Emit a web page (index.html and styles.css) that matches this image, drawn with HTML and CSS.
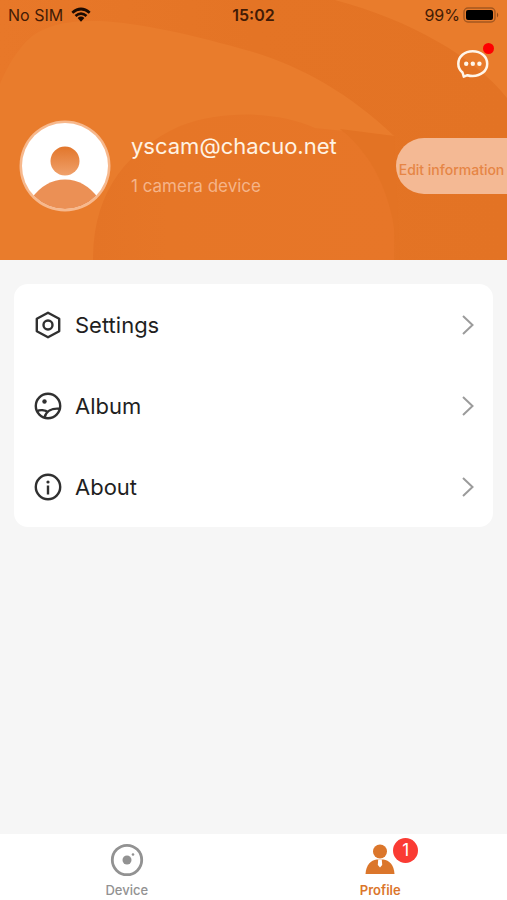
FILE: index.html
```
<!DOCTYPE html>
<html lang="en">
<head>
<meta charset="utf-8">
<meta name="viewport" content="width=device-width, initial-scale=1">
<title>Profile</title>
<link rel="stylesheet" href="styles.css">
</head>
<body>
<header class="hero">
  <svg class="hero-art" viewBox="0 0 507 260" preserveAspectRatio="none" aria-hidden="true">
    <defs>
      <linearGradient id="disc" x1="0" y1="0" x2="1" y2="0">
        <stop offset="0" stop-color="#e47426"/><stop offset="0.25" stop-color="#e67627"/><stop offset="1" stop-color="#e77628"/>
      </linearGradient>
      <linearGradient id="corner" x1="0" y1="0" x2="1" y2="0">
        <stop offset="0" stop-color="#e87829"/><stop offset="0.5" stop-color="#e47425"/><stop offset="1" stop-color="#e37324"/>
      </linearGradient>
    </defs>
    <rect width="507" height="260" fill="#e97c2c"/>
    <path d="M0 0H335C410 20 475 57 507 98V260H390L394 136C350 94 302 67 253 52C190 34 140 23 100 21C60 20 38 28 24 44C12 58 6 70 0 84Z" fill="url(#corner)"/>
    <path d="M93 260C93 190 128 150 180 126C225 109 280 112 315 128L394 136V260Z" fill="url(#disc)"/>
    <path d="M340 129L394 136L400 260H397C396 210 380 160 340 129Z" fill="#e37324"/>
  </svg>
  <div class="status">
    <div class="carrier"><span>No SIM</span>
      <svg width="20" height="16" viewBox="0 0 20 16" aria-hidden="true">
        <g fill="none" stroke="#1c0b02" stroke-width="2.7"><path d="M1.3 5.7Q10-1.7 18.7 5.7"/><path d="M4.500 9Q10 4.300 15.500 9"/></g>
        <path d="M6.600 11Q10 8.200 13.400 11L10 14.800Z" fill="#1c0b02"/>
      </svg>
    </div>
    <strong class="clock">15:02</strong>
    <div class="battery"><span>99%</span>
      <svg width="36" height="16" viewBox="0 0 36 16" aria-hidden="true">
        <rect x="1" y="1" width="31" height="14" rx="4" fill="none" stroke="#a4571f" stroke-width="1.4"/>
        <rect x="3" y="3" width="27" height="10" rx="2" fill="#000"/>
        <path d="M34 5.500Q36.500 8 34 10.500Z" fill="#914917"/>
      </svg>
    </div>
  </div>
  <div class="actions">
    <button class="messages" type="button" aria-label="Messages">
      <svg width="34" height="32" viewBox="0 0 34 32" aria-hidden="true">
        <path d="M6.500 23.500C3.800 21.200 2.300 18.200 2.300 14.700C2.300 7.400 8.600 2.200 16.700 2.200S31.200 7.400 31.200 14.700S24.800 27 16.700 27C14.800 27 13 26.700 11.500 26.200L7.800 27.700Z" fill="none" stroke="#fff6ea" stroke-width="2.500" stroke-linejoin="round"/>
        <g fill="#fff6ea"><circle cx="10.200" cy="14.800" r="2.200"/><circle cx="16.800" cy="14.800" r="2.200"/><circle cx="23.400" cy="14.800" r="2.200"/></g>
      </svg>
      <span class="dot"></span>
    </button>
  </div>
  <div class="profile">
    <svg class="avatar" width="92" height="92" viewBox="0 0 92 92" role="img" aria-label="Avatar">
      <defs>
        <linearGradient id="head" x1="0" y1="0" x2="0" y2="1"><stop offset="0" stop-color="#e2762b"/><stop offset="1" stop-color="#f0a16b"/></linearGradient>
        <clipPath id="round"><circle cx="46" cy="46" r="43"/></clipPath>
      </defs>
      <circle cx="46" cy="46" r="45.500" fill="#f7b88c"/>
      <circle cx="46" cy="46" r="43" fill="#fff"/>
      <circle cx="46" cy="41" r="14.500" fill="url(#head)"/>
      <path d="M12 79Q26 59.500 46 59.500T80 79V92H12Z" fill="#eb9055" clip-path="url(#round)"/>
    </svg>
    <div class="identity">
      <h1>yscam@chacuo.net</h1>
      <p>1 camera device</p>
    </div>
    <button class="edit" type="button">Edit information</button>
  </div>
</header>
<main>
  <nav class="menu" aria-label="Account">
    <a href="#settings">
      <svg class="icon" viewBox="0 0 28 28" aria-hidden="true"><path d="M14 1.800L25.200 7.800V20.200L14 26.200L2.800 20.200V7.800Z" stroke-linejoin="round"/><circle cx="14" cy="14" r="4.500"/></svg>
      <span>Settings</span>
      <svg class="chevron" viewBox="0 0 12 20" aria-hidden="true"><path d="M1 1L10.500 10L1 19"/></svg>
    </a>
    <a href="#album">
      <svg class="icon" viewBox="0 0 28 28" aria-hidden="true"><circle cx="14" cy="14" r="12.200"/><path d="M2.500 19.500C6 17.500 11 17.700 14.500 20.500M10.500 25.500C12 19.500 17.500 16 25.500 16.800"/><circle cx="10.500" cy="9.500" r="2.200" fill="#303030" stroke="none"/></svg>
      <span>Album</span>
      <svg class="chevron" viewBox="0 0 12 20" aria-hidden="true"><path d="M1 1L10.500 10L1 19"/></svg>
    </a>
    <a href="#about">
      <svg class="icon" viewBox="0 0 28 28" aria-hidden="true"><circle cx="14" cy="14" r="12.200"/><path d="M14 12.500V21.500"/><circle cx="14" cy="9" r="1.600" fill="#303030" stroke="none"/></svg>
      <span>About</span>
      <svg class="chevron" viewBox="0 0 12 20" aria-hidden="true"><path d="M1 1L10.500 10L1 19"/></svg>
    </a>
  </nav>
</main>
<nav class="tabs" aria-label="Main">
  <a href="#device">
    <svg width="34" height="34" viewBox="0 0 34 34" aria-hidden="true"><circle cx="17" cy="17" r="14.700" fill="none" stroke="#929292" stroke-width="2.800"/><circle cx="17" cy="17" r="4.500" fill="#929292"/><circle cx="23" cy="11.500" r="1.300" fill="#929292"/></svg>
    <span>Device</span>
  </a>
  <a class="active" href="#profile" aria-current="page">
    <span class="tab-icon">
      <svg width="34" height="34" viewBox="0 0 34 34" aria-hidden="true"><circle cx="17" cy="8.500" r="7" fill="#db762b"/><path d="M2.500 31C3 22 8 17 13.500 16.500H20.500C26 17 31 22 31.500 31Z" fill="#db762b"/><path d="M15.200 16.500H18.800L19.200 22L17 24.500L14.800 22Z" fill="#fff"/></svg>
      <span class="badge">1</span>
    </span>
    <span>Profile</span>
  </a>
</nav>
</body>
</html>
```
FILE: styles.css
```
* { box-sizing: border-box; }
body {
  margin: 0;
  min-height: 100vh;
  display: flex;
  flex-direction: column;
  background: #f6f6f6;
  color: #1f1f1f;
  font-family: Inter, "Liberation Sans", sans-serif;
}
a { color: inherit; text-decoration: none; }
button { border: 0; padding: 0; background: none; font: inherit; cursor: pointer; }
svg { display: block; flex: none; }

.hero { position: relative; padding-bottom: 48px; overflow: hidden; background: #e97c2c; }
.hero-art { position: absolute; inset: 0; width: 100%; height: 100%; }
.status, .actions, .profile { position: relative; }
.status {
  display: grid;
  grid-template-columns: 1fr auto 1fr;
  align-items: center;
  height: 29px;
  padding: 0 8px;
  color: #421b05;
  font-size: 16px;
}
.carrier, .battery { display: flex; align-items: center; gap: 8px; }
.battery { justify-content: flex-end; gap: 3px; }
.clock { font-weight: 600; }
.actions { display: flex; justify-content: flex-end; padding: 20px 17px 0; }
.messages { position: relative; }
.dot { position: absolute; top: -6px; right: -4px; width: 11px; height: 11px; border-radius: 50%; background: #fe0000; }
.profile { display: flex; align-items: center; margin-top: 39px; padding-left: 19px; }
.identity { flex: 1; min-width: 0; margin-left: 20px; }
.identity h1 { margin: 0; color: #fff3e3; font-size: 22px; font-weight: 400; line-height: 28px; }
.identity p { margin: 12px 0 0; color: #f5b489; font-size: 17px; line-height: 28px; }
.edit {
  width: 111px;
  height: 56px;
  padding-top: 6px;
  border-radius: 28px 0 0 28px;
  background: #f4b994;
  color: #e68545;
  font-size: 14px;
  font-weight: 500;
  white-space: nowrap;
}

main { flex: 1; padding: 24px 14px; }
.menu { border-radius: 14px; background: #fff; }
.menu a { display: flex; align-items: center; height: 81px; padding: 0 19px 0 20px; font-size: 22px; }
.menu span { flex: 1; margin-left: 13px; }
.icon { width: 28px; height: 28px; fill: none; stroke: #303030; stroke-width: 2.4; }
.chevron { width: 12px; height: 20px; fill: none; stroke: #9b9b9b; stroke-width: 2; }

.tabs { display: flex; height: 66px; background: #fff; }
.tabs a {
  flex: 1;
  display: flex;
  flex-direction: column;
  align-items: center;
  gap: 4px;
  padding-top: 9px;
  color: #929292;
  font-size: 13px;
  font-weight: 500;
  line-height: 18px;
}
.tabs .active { color: #db762b; font-weight: 600; }
.tab-icon { position: relative; }
.badge {
  position: absolute;
  top: -5px;
  left: 30px;
  width: 25px;
  height: 25px;
  border-radius: 50%;
  background: #fa3b33;
  color: #fff;
  font-size: 17px;
  font-weight: 400;
  line-height: 25px;
  text-align: center;
}
```
